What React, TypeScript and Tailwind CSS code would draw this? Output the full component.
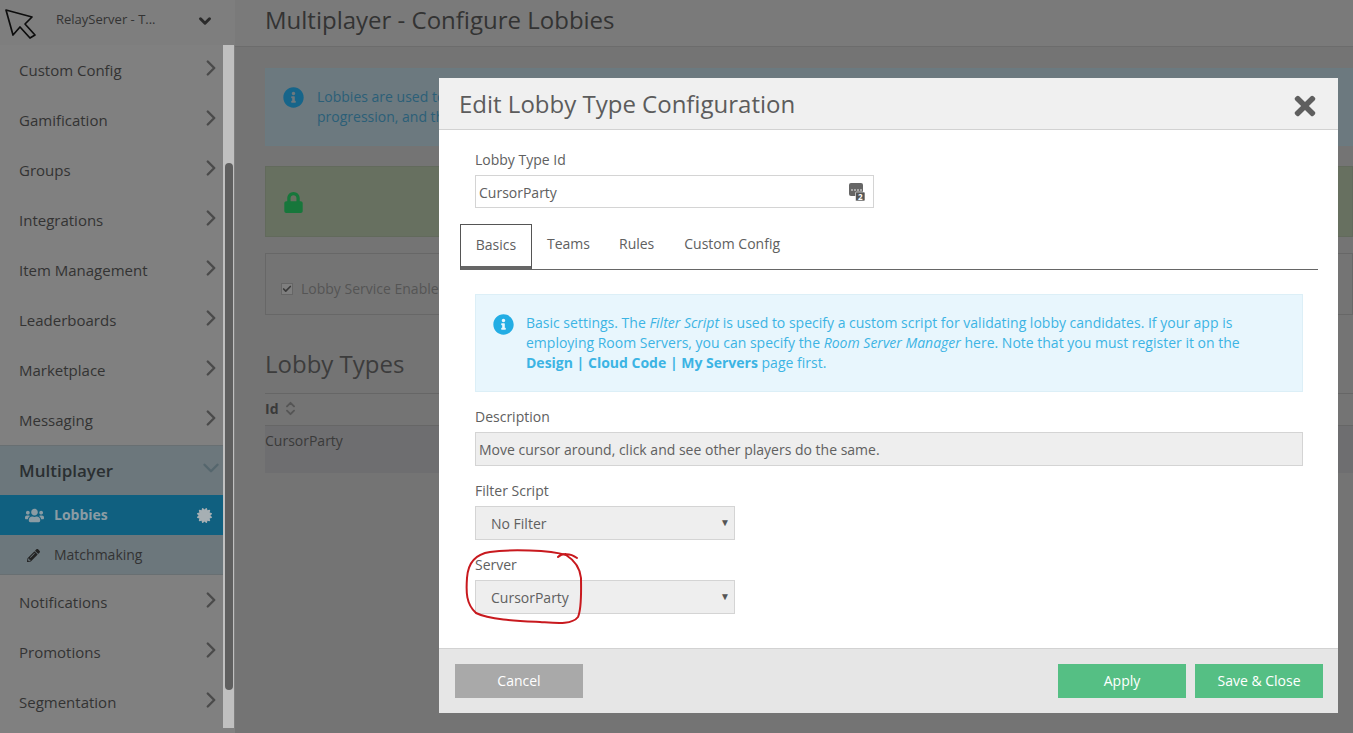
import { ChevronDown, ChevronRight, Check, ChevronsUpDown } from "lucide-react"
import { FaCertificate, FaInfoCircle, FaLock, FaPencilAlt, FaTimes, FaUsers } from "react-icons/fa"

function NavRow({ label }: { label: string }) {
  return (
    <div className="flex h-[50px] w-[223px] items-center justify-between pl-[19px] text-[15px] text-[#333]">
      <span>{label}</span>
      <ChevronRight className="-mr-[1px] mb-[4px] h-[26px] w-[26px] text-[#4a4a4a]" strokeWidth={2.2} />
    </div>
  )
}

function Sidebar() {
  return (
    <aside className="flex w-[235px] shrink-0 flex-col bg-[#808080]">
      <div className="flex h-[45px] items-center bg-[#7e7e7e]">
        <svg viewBox="0 0 40 40" className="h-[40px] w-[40px] shrink-0" fill="none" stroke="#0d0d0d" strokeWidth="1.7" strokeLinejoin="round">
          <path d="M6 7 L32 14 L25 21 L35 32 L30 35 L20 24 L13 32 Z" />
        </svg>
        <span className="mb-[6px] ml-[16px] w-[130px] text-[13px] text-[#333]">RelayServer - T...</span>
        <ChevronDown className="mb-[4px] ml-[10px] h-[18px] w-[18px] text-[#2b2b2b]" strokeWidth={4} />
      </div>
      <div>
        {["Custom Config", "Gamification", "Groups", "Integrations", "Item Management", "Leaderboards", "Marketplace", "Messaging"].map((l) => (
          <NavRow key={l} label={l} />
        ))}
        <div className="h-[130px] w-[234px] border-y border-[#686f72] bg-[#6c777c]">
          <div className="flex h-[49px] w-[223px] items-center justify-between pl-[19px]">
            <span className="text-[17px] font-semibold text-[#2a2f31]">Multiplayer</span>
            <ChevronDown className="-mr-[1px] mb-[5px] h-[26px] w-[26px] text-[#55666d]" strokeWidth={2.2} />
          </div>
          <div className="flex h-[40px] w-[234px] items-center bg-[#176383] text-[14px] font-bold text-[#8b9ca4]">
            <div className="flex h-[40px] w-[223px] items-center bg-[#106080] pl-[25px] pr-[11px]">
              <FaUsers className="h-[19px] w-[19px]" />
              <span className="mb-[2px] ml-[10px]">Lobbies</span>
              <FaCertificate className="ml-auto h-[15px] w-[15px] text-[#a6afb3]" />
            </div>
          </div>
          <div className="flex h-[39px] w-[223px] items-center pl-[27px] text-[14px] text-[#333]">
            <FaPencilAlt className="mt-[2px] h-[13px] w-[13px] text-[#222]" />
            <span className="mb-[1px] ml-[14px]">Matchmaking</span>
          </div>
        </div>
        <div className="pt-[2px]">
          {["Notifications", "Promotions", "Segmentation"].map((l) => (
            <NavRow key={l} label={l} />
          ))}
        </div>
      </div>
    </aside>
  )
}

function Backdrop() {
  return (
    <main className="min-w-0 flex-1 overflow-hidden bg-[#747474] pl-[30px] text-[#3a3a3a]">
      <div className="-ml-[30px] h-[47px] border-b border-[#6c6c6c] bg-[#7a7a7a] pl-[30px]">
        <h1 className="mt-0 pt-[2px] text-[24px] leading-[36px] text-[#333]">Multiplayer - Configure Lobbies</h1>
      </div>
      <div className="mt-[21px] flex h-[78px] items-start border border-[#6a7a80] bg-[#6c797f] pl-[17px] pt-[18px] text-[14px] leading-[20px] text-[#2b5f78]">
        <FaInfoCircle className="h-[21px] w-[21px] shrink-0 text-[#16658a]" />
        <p className="ml-[13px]">
          Lobbies are used to
          <br />
          progression, and th
        </p>
      </div>
      <div className="mt-[20px] flex h-[71px] items-center border border-[#626a5c] bg-[#677060] pl-[17px]">
        <FaLock className="mt-[2px] h-[21px] w-[21px] text-[#17773b]" />
      </div>
      <div className="mt-[16px] flex h-[62px] items-center border border-[#676767] pl-[15px] pt-[9px] text-[14px] text-[#555]">
        <span className="flex h-[12px] w-[12px] items-center justify-center border border-[#666] bg-[#7f7f7f]">
          <Check className="h-[10px] w-[10px] text-[#3a3a3a]" strokeWidth={4} />
        </span>
        <span className="ml-[8px]">Lobby Service Enabled</span>
      </div>
      <h2 className="mt-[31px] h-[47px] text-[24px] leading-[36px] text-[#3c3c3c]">Lobby Types</h2>
      <div className="flex h-[33px] items-center border-y border-[#666] pb-[3px] text-[14px] font-bold text-[#3a3a3a]">
        Id
        <ChevronsUpDown className="ml-[3px] h-[17px] w-[17px] text-[#555]" strokeWidth={2.6} />
      </div>
      <div className="h-[47px] bg-[#6e6e70] pt-[4px] text-[14px] text-[#3a3a3a]">CursorParty</div>
    </main>
  )
}

function Field({ label, className, children }: { label: string; className?: string; children: React.ReactNode }) {
  return (
    <div className={className}>
      <div className="mb-[5px] text-[14px] leading-[20px] text-[#606060]">{label}</div>
      {children}
    </div>
  )
}

function FakeSelect({ value }: { value: string }) {
  return (
    <div className="flex h-[34px] w-[260px] items-center justify-between border border-[#d4d4d4] bg-[#eeeeee] pl-[15px] pr-[4px] text-[14px] text-[#606060]">
      {value}
      <span className="mb-[2px] text-[10px] text-[#555]">▼</span>
    </div>
  )
}

function Modal() {
  return (
    <div className="absolute left-[439px] top-[78px] flex h-[635px] w-[899px] flex-col bg-white text-[#606060]">
      <div className="flex h-[52px] items-center justify-between border-b border-[#d2d2d2] bg-[#f0f0f0] pl-[20px] pr-[18px]">
        <span className="text-[24px] leading-[50px] text-[#5c5c5c]">Edit Lobby Type Configuration</span>
        <FaTimes className="mt-[4px] h-[30px] w-[30px] text-[#5f5f5f]" />
      </div>
      <div className="flex-1 pl-[21px] pr-[20px] pt-[20px]">
        <div className="pl-[15px]">
          <Field label="Lobby Type Id">
            <div className="flex h-[33px] w-[399px] items-center justify-between border border-[#d4d4d4] pl-[3px] pr-[8px] text-[14px]">
              <span className="mt-[1px]">CursorParty</span>
              <svg viewBox="0 0 16 18" className="h-[18px] w-[16px]">
                <rect x="0" y="0" width="14" height="13" rx="2" fill="#666" />
                <circle cx="3" cy="7" r="0.8" fill="#fff" />
                <circle cx="6" cy="7" r="0.8" fill="#fff" />
                <circle cx="9" cy="7" r="0.8" fill="#fff" />
                <circle cx="12" cy="7" r="0.8" fill="#fff" />
                <rect x="6.5" y="9" width="9.5" height="9" rx="1" fill="#555" stroke="#fff" strokeWidth="0.6" />
                <text x="11.2" y="16.6" textAnchor="middle" fontSize="8" fontWeight="700" fill="#fff">2</text>
              </svg>
            </div>
          </Field>
        </div>
        <div className="mt-[16px] flex h-[46px] border-b border-[#666] text-[14px]">
          <div className="h-[46px] w-[72px] border border-b-[4px] border-[#555] border-b-[#666] pt-[9px] text-center">Basics</div>
          <div className="pl-[15px] pt-[9px]">Teams</div>
          <div className="pl-[29px] pt-[9px]">Rules</div>
          <div className="pl-[30px] pt-[9px]">Custom Config</div>
        </div>
        <div className="ml-[15px] mr-[15px] pt-[24px]">
          <div className="flex h-[98px] border border-[#dceff7] bg-[#e8f6fd] pl-[17px] pt-[18px] text-[14px] leading-[20px] text-[#3cb4e4]">
            <FaInfoCircle className="mt-[1px] h-[21px] w-[21px] shrink-0 text-[#23ade4]" />
            <p className="ml-[12px]">
              Basic settings. The <i>Filter Script</i> is used to specify a custom script for validating lobby candidates. If your app is
              <br />
              employing Room Servers, you can specify the <i>Room Server Manager</i> here. Note that you must register it on the
              <br />
              <b>Design | Cloud Code | My Servers</b> page first.
            </p>
          </div>
          <Field label="Description" className="mt-[15px]">
            <div className="flex h-[34px] items-center border border-[#d4d4d4] bg-[#eeeeee] pl-[3px] text-[14px]">
              Move cursor around, click and see other players do the same.
            </div>
          </Field>
          <Field label="Filter Script" className="mt-[15px]">
            <FakeSelect value="No Filter" />
          </Field>
          <Field label="Server" className="mt-[15px]">
            <FakeSelect value="CursorParty" />
          </Field>
        </div>
      </div>
      <div className="flex h-[65px] items-center justify-between border-t border-[#d2d2d2] bg-[#e6e6e6] pl-[16px] pr-[15px] text-[14px] text-white">
        <div className="flex h-[34px] w-[128px] items-center justify-center bg-[#a9a9a9] pb-[2px]">Cancel</div>
        <div className="flex gap-[9px]">
          <div className="flex h-[34px] w-[128px] items-center justify-center bg-[#55bf84] pb-[2px]">Apply</div>
          <div className="flex h-[34px] w-[128px] items-center justify-center bg-[#55bf84] pb-[2px]">Save &amp; Close</div>
        </div>
      </div>
    </div>
  )
}

export default function App() {
  return (
    <div className="relative flex h-[733px] w-[1353px] overflow-hidden bg-[#747474] font-['Open_Sans',sans-serif]">
      <Sidebar />
      {/* scrollbar */}
      <div className="absolute left-[223px] top-[45px] h-[683px] w-[11px] bg-[#c0c0c0]">
        <div className="absolute left-[2px] top-[118px] h-[527px] w-[8px] rounded-full bg-[#5f5f5f]" />
      </div>
      <Backdrop />
      <Modal />
      {/* red pen annotation */}
      <svg className="pointer-events-none absolute inset-0 h-[733px] w-[1353px]" viewBox="0 0 1353 733" fill="none">
        <path
          d="M558 557 C562 553 570 553 577 558 M566 555 C550 550 510 549 490 552 C476 554 468 562 467 578 C466 592 466 604 476 613 C490 620 520 621 540 622 C556 623 572 625 578 617 C582 608 581 590 581 578 C580 568 574 560 566 555"
          stroke="#c8191e"
          strokeWidth="2"
          strokeLinecap="round"
        />
      </svg>
    </div>
  )
}
